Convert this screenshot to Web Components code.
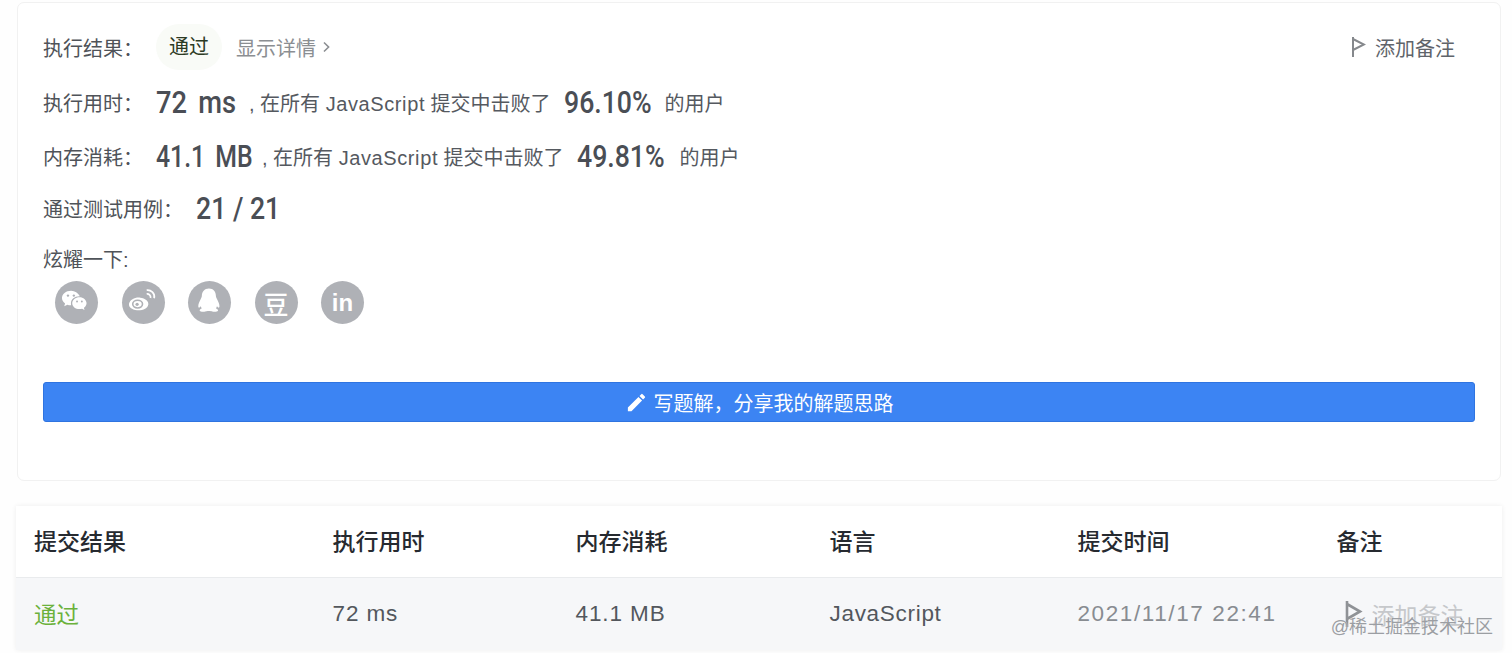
<!DOCTYPE html>
<html lang="zh"><head><meta charset="utf-8">
<style>
html,body{margin:0;padding:0;background:#fefefe;}
body{width:1512px;height:653px;overflow:hidden;position:relative;font-family:"Liberation Sans","Noto Sans CJK SC",sans-serif;color:#4b4f57;}
</style></head><body>
<result-card>
  <stat-row style="--mt:24px">
    <span slot="label">执行结果：</span>
    <status-pill>通过</status-pill><detail-link>显示详情</detail-link>
    <note-button slot="end"></note-button>
  </stat-row>
  <stat-row style="--mt:15px">
    <span slot="label">执行用时：</span>
    <big-num style="--w:93px;--ws:5px">72 ms</big-num><beat-text lang-name="JavaScript" num="96.10%"></beat-text>
  </stat-row>
  <stat-row style="--mt:14px">
    <span slot="label">内存消耗：</span>
    <big-num style="--w:106px;--ws:5px;--sx:.8">41.1 MB</big-num><beat-text lang-name="JavaScript" num="49.81%" style="--pr:15px"></beat-text>
  </stat-row>
  <stat-row style="--mt:12px;--lw:153px">
    <span slot="label">通过测试用例：</span>
    <big-num style="--sx:.86">21 / 21</big-num>
  </stat-row>
  <share-row></share-row>
  <write-button>写题解，分享我的解题思路</write-button>
</result-card>
<submit-table></submit-table>
<water-mark>@稀土掘金技术社区</water-mark>
<script>
const CJK='"Liberation Sans","Noto Sans CJK SC",sans-serif';
function def(name,html){
  customElements.define(name,class extends HTMLElement{
    constructor(){super();const r=this.attachShadow({mode:'open'});r.innerHTML=typeof html==='function'?html(this):html;}
  });
}
const NUM=`font:500 31px Roboto,"Liberation Sans",sans-serif;color:#4a4e55;white-space:nowrap;display:inline-block;transform:scaleX(var(--sx,.88));transform-origin:0 50%;`;
def('result-card',`<style>:host{display:block;box-sizing:border-box;margin:2px 0 0 17px;width:1484px;height:479px;background:#fff;border:1px solid #f1f1f1;border-radius:7px;padding:0 25px;font:20px ${CJK};color:#4b4f57}</style><slot></slot>`);
def('stat-row',`<style>:host{display:flex;align-items:center;height:40px;margin-top:var(--mt)}
.l{width:var(--lw,113px);flex:none;color:#4f5359}.e{margin-left:auto;margin-right:20px}</style>
<div class="l"><slot name="label"></slot></div><slot></slot><div class="e"><slot name="end"></slot></div>`);
def('status-pill',`<style>:host{display:block;width:66px;height:46px;line-height:46px;text-align:center;border-radius:23px;background:#f9fbf7;color:#2c3a24}</style><slot></slot>`);
def('detail-link',`<style>:host{display:flex;align-items:center;gap:7px;margin-left:14px;color:#8b8e92}</style><slot></slot><svg width="7" height="12" viewBox="0 0 7 12" fill="none" stroke="#8b8e92" stroke-width="1.6"><path d="M1 1.5 5.6 6 1 10.5"/></svg>`);
def('note-button',`<style>:host{display:flex;align-items:center;gap:9px;color:#60646a}</style><svg width="15" height="20" viewBox="0 0 15 20" fill="none" stroke="#85888c" stroke-width="2"><path d="M2 0v20M2 2l11 5.500L2 13"/></svg><span>添加备注</span>`);
def('big-num',`<style>:host{display:block;width:var(--w,auto)}span{${NUM}word-spacing:var(--ws,0)}</style><span><slot></slot></span>`);
def('beat-text',h=>`<style>:host{display:flex;align-items:center;color:#55595f;white-space:nowrap}
b{${NUM}--sx:.86;font-weight:500;width:88px;margin:0 var(--pr,13px) 0 13px}span.j{letter-spacing:.6px}</style>
<span>, 在所有 <span class="j">${h.getAttribute('lang-name')}</span> 提交中击败了</span><b>${h.getAttribute('num')}</b><span>的用户</span>`);
const ic={
wechat:`<path fill="#fff" d="M17 11c-5 0-8.600 3.200-8.600 6.900 0 2.100 1.100 3.800 2.900 5l-.8 2.600 3-1.500c1 .3 1.800.5 2.900.5h.6a6 6 0 0 1-.2-1.700c0-3.700 3.400-6.600 7.800-6.600h.6C23.400 13 20.400 11 17 11z"/><path fill="#fff" d="M24.800 17c-3.800 0-6.800 2.500-6.800 5.600s3 5.600 6.800 5.600c.8 0 1.600-.2 2.400-.4l2.300 1.200-.6-2c1.500-1.100 2.500-2.700 2.500-4.400 0-3.100-3-5.600-6.600-5.600z"/><g fill="#afb1b6"><circle cx="14" cy="15.500" r="1.100"/><circle cx="19.500" cy="15.500" r="1.100"/><circle cx="22.500" cy="21" r=".9"/><circle cx="27" cy="21" r=".9"/></g>`,
weibo:`<path fill="#fff" d="M19 17.500c-5-.6-9.500 2-10.500 5.500-.8 3.200 2.500 6 7.500 6.300 5.500.3 10-2 10.500-5.500.3-3.200-3-5.700-7.500-6.300z"/><ellipse cx="16.500" cy="23.500" rx="4.600" ry="3.600" fill="none" stroke="#afb1b6" stroke-width="1.500"/><circle cx="16" cy="23.700" r="1.500" fill="#afb1b6"/><path fill="none" stroke="#fff" stroke-width="1.600" d="M25 10.500c4-.5 8 3 7 7.500M25 14c2-.3 4 1.500 3.600 3.800"/>`,
qq:`<path fill="#fff" d="M21.500 9c-4.300 0-6.600 3.200-6.700 7-.1 1-.3 1.500-1 2.800-1 1.900-2.300 4.500-2.300 6.500 0 2 1 2 2.300.2l.9 2c-1.600.6-2.300 1.500-1.800 2.300.6 1 3.500 1.100 5.200.6.9-.3 1.500-.5 3.300-.5s2.300.2 3.200.5c1.700.5 4.700.4 5.300-.6.500-.8-.2-1.700-1.800-2.300l.9-2c1.300 1.800 2.300 1.800 2.300-.2 0-2-1.300-4.600-2.300-6.500-.7-1.300-.9-1.800-1-2.800C28 12.200 25.800 9 21.500 9z"/>`,
};
def('share-icon',h=>{const k=h.getAttribute('k');
 const inner=ic[k]?`<svg width="47" height="47" viewBox="0 0 44 44">${ic[k]}</svg>`:`<span class="${k}">${k==='db'?'豆':'in'}</span>`;
 return `<style>:host{display:flex;align-items:center;justify-content:center;width:43px;height:43px;border-radius:50%;background:#afb1b6;color:#fff;overflow:hidden}
 svg{display:block;flex:none}.db{font:500 25px "Noto Sans CJK SC",sans-serif}.in{font:700 24px "Liberation Sans",sans-serif}</style>${inner}`;});
def('share-row',`<style>:host{display:block;margin-top:18px}.t{color:#4f5359;line-height:28px}.r{display:flex;gap:23.500px;margin:7px 0 0 12px}</style>
<div class="t">炫耀一下:</div><div class="r"><share-icon k="wechat"></share-icon><share-icon k="weibo"></share-icon><share-icon k="qq"></share-icon><share-icon k="db"></share-icon><share-icon k="in"></share-icon></div>`);
def('write-button',`<style>:host{display:flex;align-items:center;justify-content:center;gap:6px;box-sizing:border-box;margin-top:58px;height:40px;background:#3c84f3;border:1px solid #2f74e0;border-radius:3px;color:#fff;font:20px ${CJK}}</style>
<svg width="23" height="23" viewBox="0 0 24 24" fill="#fff"><path d="M3 17.250V21h3.750L17.810 9.940l-3.750-3.750zM20.710 7.040a1 1 0 0 0 0-1.410l-2.340-2.340a1 1 0 0 0-1.410 0l-1.830 1.830 3.750 3.750z"/></svg><slot></slot>`);
def('table-row',`<style>:host{display:grid;grid-template-columns:298.500px 243px 254px 248px 259px 1fr;padding-left:18px;align-items:center;box-sizing:border-box}</style><slot></slot>`);
def('submit-table',`<style>:host{display:block;margin:25px 0 0 16px;width:1486px;background:#fff;box-shadow:0 0 5px rgba(0,0,0,.07);font:22.500px ${CJK}}
span{display:block}
.h{color:#262a30;font-weight:500;font-family:"Noto Sans CJK SC",sans-serif;font-size:23px;border-bottom:1px solid #e9ebed;height:72px;line-height:64px}
.h span{margin-bottom:4px}
.b{background:#f6f7f9;height:72px;color:#53575d;letter-spacing:.9px}.g{color:#6bb13b;letter-spacing:0;margin-top:-3px}.t{color:#888c91;letter-spacing:1.600px}.j{letter-spacing:.7px}
.n{display:flex;align-items:center;gap:9px;color:#c6c8cb;letter-spacing:0;font-size:23px;margin-left:7px}</style>
<table-row class="h"><span>提交结果</span><span>执行用时</span><span>内存消耗</span><span>语言</span><span>提交时间</span><span>备注</span></table-row>
<table-row class="b"><span class="g">通过</span><span>72 ms</span><span>41.1 MB</span><span class="j">JavaScript</span><span class="t">2021/11/17 22:41</span><span class="n"><svg width="19" height="26" viewBox="0 0 19 26" fill="none" stroke="#8f9296" stroke-width="2.600"><path d="M3 0v26M3 3l13 7.500L3 18"/></svg>添加备注</span></table-row>`);
def('water-mark',`<style>:host{position:absolute;right:19px;top:612px;font:18px ${CJK};color:#9b9ea3;text-shadow:0 0 1px rgba(255,255,255,.7)}</style><slot></slot>`);
</script>
</body></html>
